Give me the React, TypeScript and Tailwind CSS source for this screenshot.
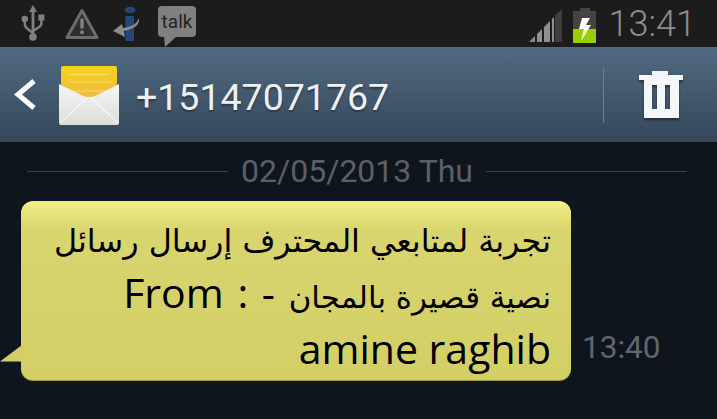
import React from "react";

function Usb() {
  return (
    <svg width="24" height="38" viewBox="0 0 24 38" className="block">
      <g fill="#808080" stroke="none">
        <path d="M12 0l4 7h-2.6v24h-2.8V7H8z" />
        <circle cx="12" cy="32" r="3.8" />
        <circle cx="3.8" cy="14" r="3.2" />
        <rect x="17.4" y="9.5" width="6" height="6" />
      </g>
      <path d="M3.8 15v4q0 3 3 5l5 4M20.4 14v4q0 3-3 4.500l-5.400 3.500" fill="none" stroke="#808080" strokeWidth="2.4" />
    </svg>
  );
}

function Warning() {
  return (
    <svg width="34" height="32" viewBox="0 0 34 32" className="block">
      <path d="M17 2.500L32 29.500H2z" fill="#2e2e2e" stroke="#6d6d6d" strokeWidth="3" strokeLinejoin="round" />
      <rect x="15.300" y="10.500" width="3.400" height="10" rx="1" fill="#808080" />
      <circle cx="17" cy="24.300" r="2" fill="#808080" />
    </svg>
  );
}

function InfoArrow() {
  return (
    <svg width="28" height="36" viewBox="0 0 28 36" className="block">
      <ellipse cx="17" cy="4" rx="5.500" ry="3.300" fill="#24486f" />
      <path d="M12.500 10h8.500v25h-8.500z" fill="#234a75" />
      <path d="M26 12c1 7-5 11-15 13l1 6L0 25l9-7 1 4c8-1 14-4 16-10z" fill="#8b8b8b" />
    </svg>
  );
}

function Talk() {
  return (
    <div className="relative w-[38px] h-[37px]">
      <div className="w-[38px] h-[31px] rounded-[4px] bg-[#808080] flex items-center justify-center font-['Roboto',sans-serif] text-[19px] leading-none text-[#222222]">
        talk
      </div>
      <svg width="14" height="12" viewBox="0 0 14 12" className="absolute left-[6px] top-[30px]">
        <path d="M0 0h13L1 11z" fill="#808080" />
      </svg>
    </div>
  );
}

function Signal() {
  return (
    <svg width="34" height="34" viewBox="0 0 34 34" className="block">
      <path d="M33 1v33H26V7z" fill="#3f3f3f" />
      <path d="M0 34l6-6v6z" fill="#8a8a8a" />
      <path d="M8 26l5-5v13H8zM15 19l6-6v21h-6zM23 11l2-2v25h-2z" fill="#8f8f8f" />
    </svg>
  );
}

function Battery() {
  return (
    <svg width="24" height="35" viewBox="0 0 24 35" className="block">
      <rect x="7" y="0" width="10" height="3" fill="#444444" />
      <rect x="0" y="3" width="23" height="21" fill="#444444" />
      <rect x="0" y="21" width="23" height="14" fill="#96d000" />
      <path d="M9 10h8l-4 7h5l-10 16 3-12H6z" fill="#ffffff" />
    </svg>
  );
}

function Envelope() {
  return (
    <svg width="62" height="62" viewBox="0 0 62 62" className="block">
      <defs>
        <linearGradient id="fl" x1="0" y1="0" x2="0" y2="1">
          <stop offset="0" stopColor="#f4d518" />
          <stop offset="1" stopColor="#efb54a" />
        </linearGradient>
        <linearGradient id="bd" x1="0" y1="0" x2="0" y2="1">
          <stop offset="0" stopColor="#f6f6f5" />
          <stop offset="1" stopColor="#dcdcdb" />
        </linearGradient>
      </defs>
      <path d="M3 3q0-2 2-2h52q2 0 2 2v34H3z" fill="url(#fl)" />
      <path d="M11 9.500h40M11 17h42M11 26h42" stroke="#f7e27a" strokeWidth="0.800" fill="none" />
      <path d="M1 19l24 12q6 2 12 0l24-12v39q0 2-2 2H3q-2 0-2-2z" fill="url(#bd)" />
      <path d="M29 33L2 58M33 33l27 25" stroke="#ffffff" strokeWidth="1" fill="none" />
    </svg>
  );
}

function Trash() {
  return (
    <svg width="46" height="48" viewBox="0 0 46 48" className="block drop-shadow-[0_2px_1px_rgba(0,0,0,0.45)]">
      <path fillRule="evenodd" fill="#f5f6f8" d="M14 0h16v4h15v5H41v38H6V9H1V4h13zM14 14v24h5V14zM27 14v24h5V14z" />
    </svg>
  );
}

export default function App() {
  return (
    <div className="w-[717px] h-[419px] overflow-hidden flex flex-col bg-[#0e151d] font-['Roboto',sans-serif]">
      <div className="h-[47px] bg-[#1c1c1c] flex items-center pl-[21px] pr-[21px] shrink-0">
        <Usb />
        <div className="ml-[20px]"><Warning /></div>
        <div className="ml-[14px]"><InfoArrow /></div>
        <div className="ml-[17px] mt-[2px]"><Talk /></div>
        <div className="ml-auto mt-[2px]"><Signal /></div>
        <div className="ml-[10px] mt-[3px]"><Battery /></div>
        <div className="ml-[12px] text-[36px] leading-none font-light text-[#8e8e8e]">13:41</div>
      </div>

      <div className="h-[95px] shrink-0 flex items-center bg-gradient-to-b from-[#516a82] to-[#35485a] pl-[14px] pr-[33px]">
        <svg width="22" height="32" viewBox="0 0 22 32" className="block">
          <path d="M20 2L4 15.500 20 29" fill="none" stroke="#ffffff" strokeWidth="5" />
        </svg>
        <div className="ml-[22px] mt-[2px]"><Envelope /></div>
        <div className="ml-[16px] mt-[7px] text-[37.5px] leading-none text-[#eef1f4] [text-shadow:0_2px_2px_rgba(0,0,0,0.35)]">+15147071767</div>
        <div className="ml-auto w-px h-[56px] bg-[#6b8095]" />
        <div className="ml-[34px]"><Trash /></div>
      </div>

      <div className="flex items-center mt-[12px] pl-[27px] pr-[30px] h-[34px] gap-[13px]">
        <div className="flex-1 h-px bg-[#3a4148]" />
        <div className="text-[32px] leading-none text-[#5b6067]">02/05/2013 Thu</div>
        <div className="flex-1 h-px bg-[#3a4148]" />
      </div>

      <div className="flex items-end mt-[13px]">
        <div className="relative ml-[21px] w-[550px] h-[180px] rounded-[12px] bg-[linear-gradient(#f3f088_0px,#d9d56f_28px,#d3cf66_100%)] border-b border-b-[#9a9748]">
          <svg width="22" height="18" viewBox="0 0 22 18" className="absolute left-[-21px] bottom-[17px]">
            <path d="M22 0L0 16.500h22z" fill="#d3cf66" />
          </svg>
          <div dir="rtl" className="px-[20px] pt-[10px] font-['Open_Sans',sans-serif] text-[41px] leading-[51.500px] text-black">
            <span className="font-['DejaVu_Sans',sans-serif] text-[31.8px]">تجربة لمتابعي المحترف إرسال رسائل </span>
            <span className="font-['DejaVu_Sans',sans-serif] text-[30.9px]">نصية قصيرة بالمجان</span>
            <span className="[word-spacing:3px]"> - : </span>From amine raghib
          </div>
        </div>
        <div className="ml-[11px] mb-[18px] text-[31.5px] leading-none text-[#61666c]">13:40</div>
      </div>
    </div>
  );
}
